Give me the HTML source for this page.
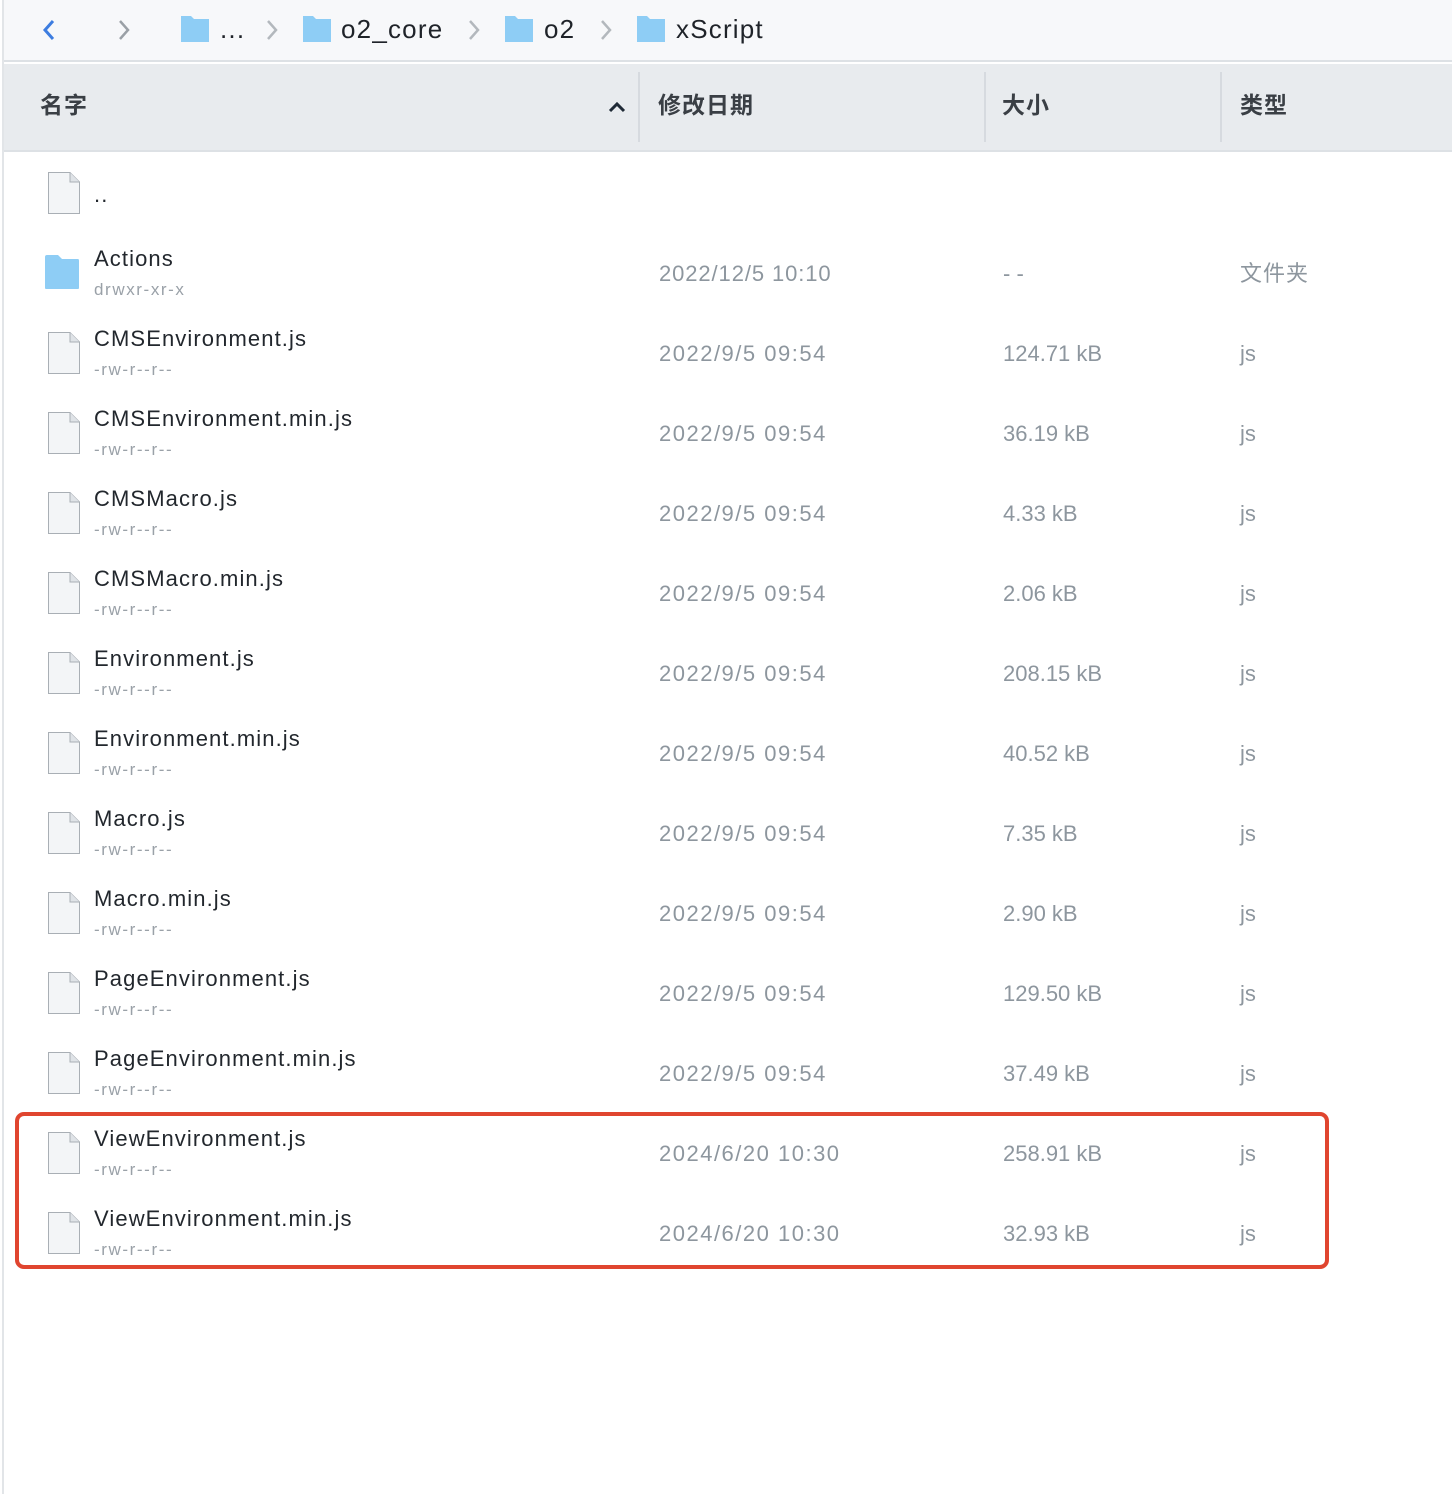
<!DOCTYPE html>
<html><head><meta charset="utf-8"><style>
*{margin:0;padding:0;box-sizing:border-box}
body{width:1452px;height:1494px;position:relative;background:#fff;font-family:"Liberation Sans","Noto Sans CJK SC",sans-serif;overflow:hidden}
.abs{position:absolute}
#lb{left:2px;top:0;width:2px;height:1494px;background:#e2e5e8}
#tb{left:4px;top:0;width:1448px;height:62px;background:#f7f8fa;border-bottom:2px solid #dde1e5}
.crumb{position:absolute;top:14px;font-size:26px;color:#1f2329;line-height:30px;letter-spacing:1.2px}
.fold{position:absolute;width:30px;height:28px}
#hd{left:4px;top:64px;width:1448px;height:88px;background:#e8ebee;border-bottom:2px solid #dde1e5}
.hl{position:absolute;top:26px;font-size:23px;font-weight:bold;color:#3a3f45;line-height:30px;letter-spacing:1px}
.sep{position:absolute;top:8px;width:2px;height:70px;background:#d6dadf}
.row{position:absolute;left:4px;width:1448px;height:80px}
.nm{position:absolute;left:90px;top:12px;font-size:22px;line-height:26px;color:#22272d;letter-spacing:1.1px}
.pm{position:absolute;left:90px;top:46px;font-size:17px;line-height:20px;color:#9aa1a8;letter-spacing:1.6px}
.c{position:absolute;top:27px;font-size:22px;line-height:26px;color:#8d969e}
.d{letter-spacing:1.5px}
.fi{position:absolute;left:44px;top:18px}
</style></head><body>
<div id="lb" class="abs"></div>
<div id="tb" class="abs">
<svg class="abs" style="left:38px;top:18px" width="16" height="24"><path d="M11 3 L3 12 L11 21" stroke="#3d7de0" stroke-width="3" fill="none"/></svg>
<svg class="abs" style="left:112px;top:18px" width="16" height="24"><path d="M4 3 L12 12 L4 21" stroke="#9aa0a6" stroke-width="2.5" fill="none"/></svg>
<svg class="fold" style="left:176px;top:15px" viewBox="0 0 30 28"><path d="M1 1 H11 L14 4 H29 V27 H1 Z" fill="#8ecdf5"/></svg>
<div class="crumb" style="left:216px">...</div>
<svg class="abs" style="left:260px;top:18px" width="16" height="24"><path d="M4 3 L12 12 L4 21" stroke="#b3b8bd" stroke-width="2.5" fill="none"/></svg>
<svg class="fold" style="left:298px;top:15px" viewBox="0 0 30 28"><path d="M1 1 H11 L14 4 H29 V27 H1 Z" fill="#8ecdf5"/></svg>
<div class="crumb" style="left:337px">o2_core</div>
<svg class="abs" style="left:462px;top:18px" width="16" height="24"><path d="M4 3 L12 12 L4 21" stroke="#b3b8bd" stroke-width="2.5" fill="none"/></svg>
<svg class="fold" style="left:500px;top:15px" viewBox="0 0 30 28"><path d="M1 1 H11 L14 4 H29 V27 H1 Z" fill="#8ecdf5"/></svg>
<div class="crumb" style="left:540px">o2</div>
<svg class="abs" style="left:594px;top:18px" width="16" height="24"><path d="M4 3 L12 12 L4 21" stroke="#b3b8bd" stroke-width="2.5" fill="none"/></svg>
<svg class="fold" style="left:632px;top:15px" viewBox="0 0 30 28"><path d="M1 1 H11 L14 4 H29 V27 H1 Z" fill="#8ecdf5"/></svg>
<div class="crumb" style="left:672px">xScript</div>
</div>
<div id="hd" class="abs">
<div class="hl" style="left:36px">名字</div>
<svg class="abs" style="left:603px;top:36px" width="20" height="14"><path d="M3 11 L10 4 L17 11" stroke="#1f2a36" stroke-width="3" fill="none"/></svg>
<div class="sep" style="left:634px"></div>
<div class="hl" style="left:654px">修改日期</div>
<div class="sep" style="left:980px"></div>
<div class="hl" style="left:998px">大小</div>
<div class="sep" style="left:1216px"></div>
<div class="hl" style="left:1236px">类型</div>
</div>

<div class="row" style="top:154px">
<svg class="fi" width="34" height="42" viewBox="0 0 34 42"><path d="M0.5 0.5 H22 L31.5 10 V41.5 H0.5 Z" fill="#f3f5f7" stroke="#a9afb5"/><path d="M22 0.5 V10 H31.5" fill="#dfe3e7" stroke="#a9afb5"/></svg>
<div class="nm" style="top:28px">..</div>
</div>

<div class="row" style="top:234px">
<svg class="abs" style="left:40px;top:20px" width="36" height="36" viewBox="0 0 36 36"><path d="M1 3 Q1 1 3 1 H14 L18 5 H34 Q35 5 35 7 V34 Q35 35 34 35 H2 Q1 35 1 34 Z" fill="#8ecdf5"/></svg>
<div class="nm">Actions</div><div class="pm">drwxr-xr-x</div>
<div class="c d" style="left:655px;letter-spacing:0.9px">2022/12/5 10:10</div>
<div class="c" style="left:999px">- -</div>
<div class="c" style="left:1236px;letter-spacing:1px">文件夹</div>
</div>

<div id="rows"></div>
<script>
var d=[["CMSEnvironment.js","2022/9/5 09:54","124.71 kB"],["CMSEnvironment.min.js","2022/9/5 09:54","36.19 kB"],["CMSMacro.js","2022/9/5 09:54","4.33 kB"],["CMSMacro.min.js","2022/9/5 09:54","2.06 kB"],["Environment.js","2022/9/5 09:54","208.15 kB"],["Environment.min.js","2022/9/5 09:54","40.52 kB"],["Macro.js","2022/9/5 09:54","7.35 kB"],["Macro.min.js","2022/9/5 09:54","2.90 kB"],["PageEnvironment.js","2022/9/5 09:54","129.50 kB"],["PageEnvironment.min.js","2022/9/5 09:54","37.49 kB"],["ViewEnvironment.js","2024/6/20 10:30","258.91 kB"],["ViewEnvironment.min.js","2024/6/20 10:30","32.93 kB"]];
var h="";
d.forEach(function(r,i){h+='<div class="row" style="top:'+(314+80*i)+'px"><svg class="fi" width="34" height="42" viewBox="0 0 34 42"><path d="M0.5 0.5 H22 L31.5 10 V41.5 H0.5 Z" fill="#f3f5f7" stroke="#a9afb5"/><path d="M22 0.5 V10 H31.5" fill="#dfe3e7" stroke="#a9afb5"/></svg><div class="nm">'+r[0]+'</div><div class="pm">-rw-r--r--</div><div class="c d" style="left:655px">'+r[1]+'</div><div class="c" style="left:999px">'+r[2]+'</div><div class="c" style="left:1236px">js</div></div>';});
document.getElementById("rows").innerHTML=h;
</script>
<div class="abs" style="left:15px;top:1112px;width:1314px;height:157px;border:4px solid #e0452f;border-radius:9px"></div>
</body></html>
